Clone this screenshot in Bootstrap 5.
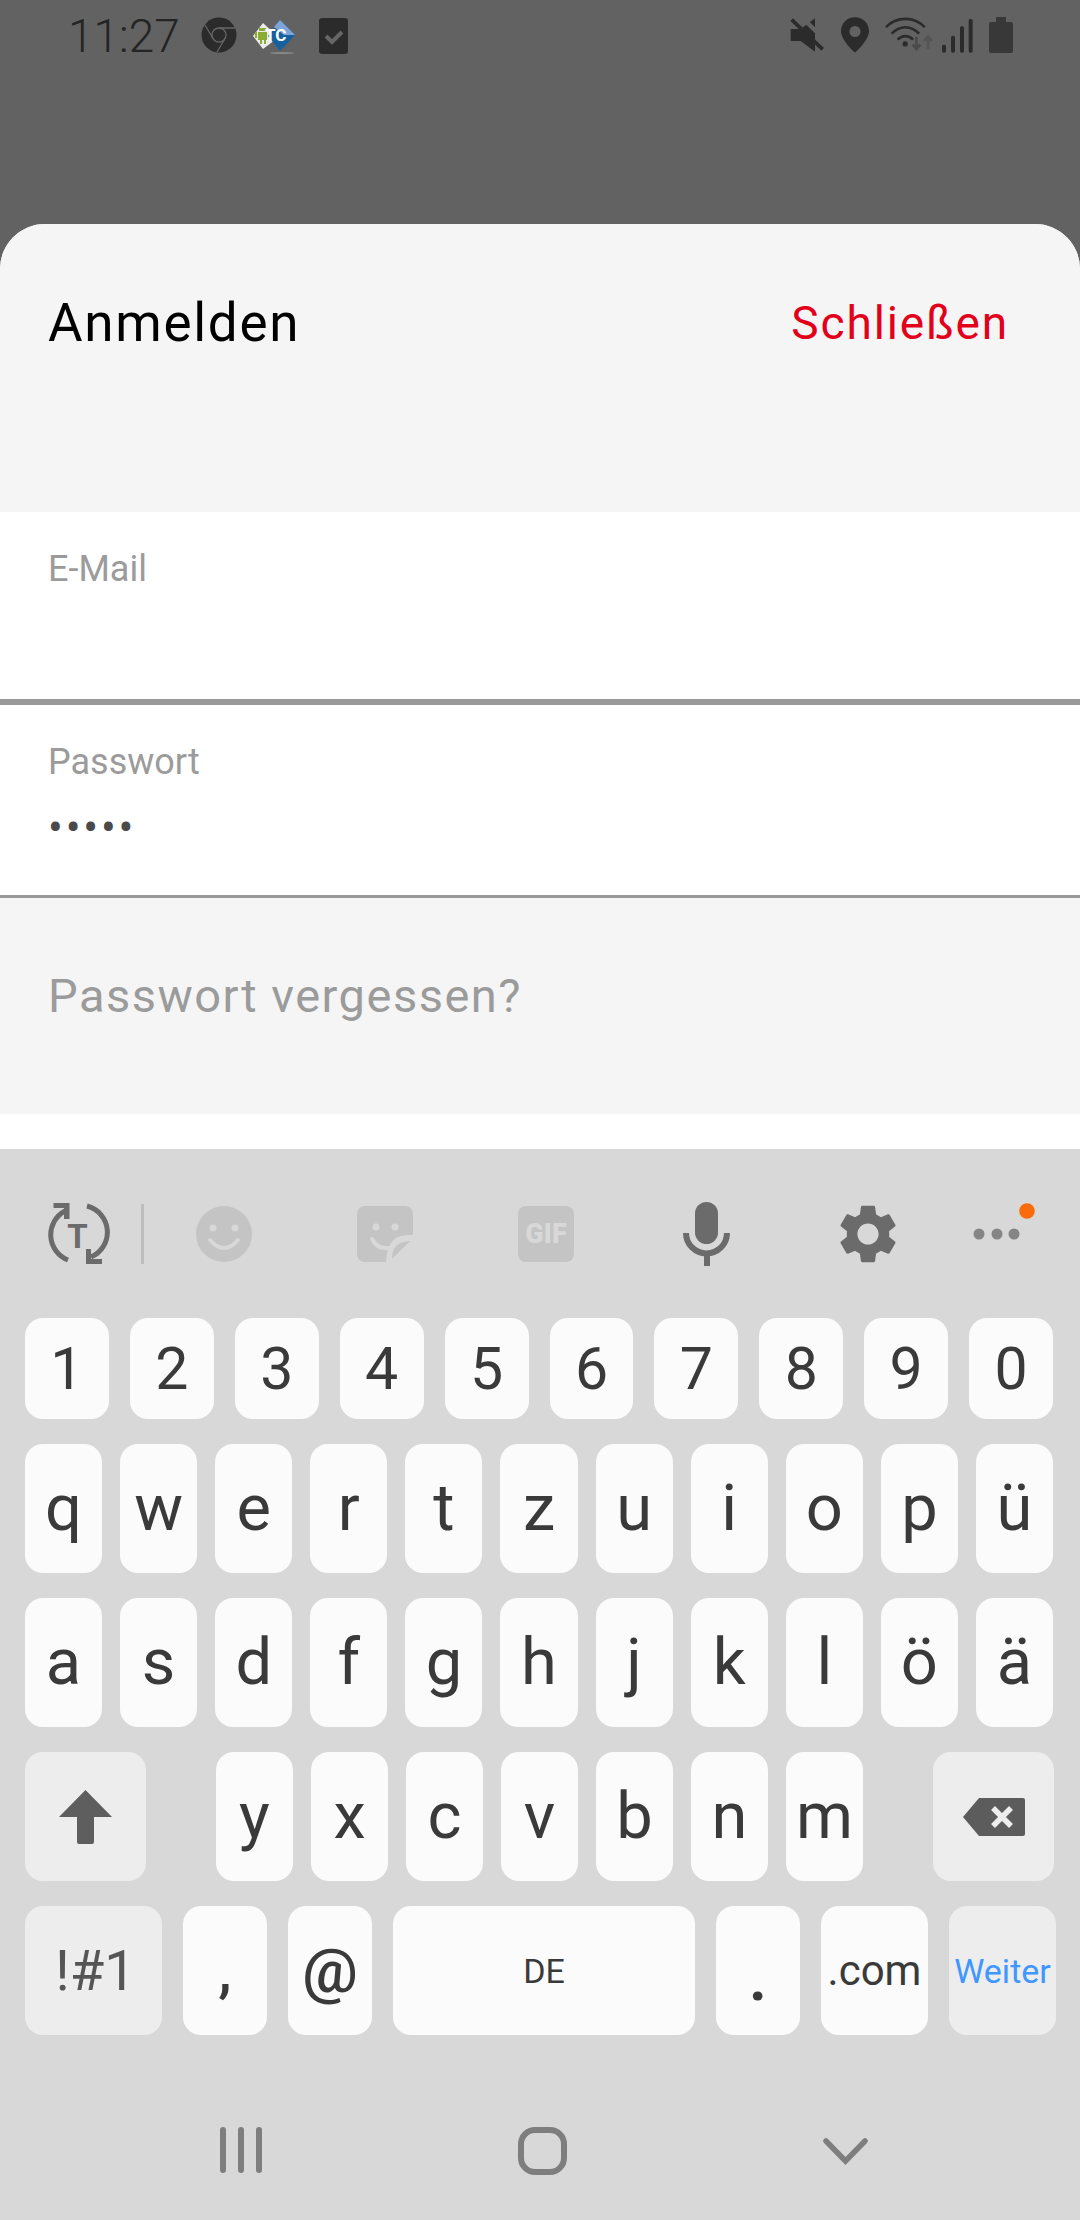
<!DOCTYPE html>
<html lang="de">
<head>
    <meta charset="UTF-8">
    <meta name="viewport" content="width=device-width, initial-scale=1.0">
    <title>Anmelden</title>
    <link href="https://cdn.jsdelivr.net/npm/bootstrap@5.3.0/dist/css/bootstrap.min.css" rel="stylesheet">
    <style>
        html, body { width: 1080px; height: 2220px; overflow: hidden; }
        body { font-family: Roboto, "Liberation Sans", sans-serif; background: #626262; }

        /* status bar */
        .status-area { height: 224px; padding: 17px 67px 0 68px; background: #626262; }
        .clock { font-size: 46px; font-weight: 300; line-height: 38px; color: #242424; margin-right: 21px; }
        .status-area svg { display: block; }

        /* login sheet */
        .sheet { background: #fff; border-radius: 45px 45px 0 0; overflow: hidden; height: 925px; }
        .sheet-head { height: 288px; padding: 68px 71px 0 48px; background: #f5f5f5; }
        .sheet-title { font-size: 53px; line-height: 62px; letter-spacing: 1.7px; color: #000; margin: 0; font-weight: 400; }
        .sheet-close { font-size: 46px; line-height: 62px; letter-spacing: 1.9px; color: #e2001a; }
        .login-field { padding: 0 48px; background: #fff; }
        .field-mail { height: 193px; padding-top: 36px; border-bottom: 6px solid #999; }
        .field-pass { height: 193px; padding-top: 36px; border-bottom: 3px solid #999; }
        .field-label { display: block; font-size: 36px; line-height: 42px; color: #9b9b9b; margin: 0; }
        .field-input { border: 0; padding: 0; border-radius: 0; font-size: 36px; line-height: 42px; height: 42px; color: #4a4a4a; background: transparent; box-shadow: none; }
        .field-input:focus { box-shadow: none; }
        .pass-dots { margin-top: 14px; height: 62px; line-height: 62px; font-size: 44px; letter-spacing: 2.8px; }
        .forgot-row { height: 216px; padding: 0 48px 20px; background: #f5f5f5; font-size: 47px; letter-spacing: 1.5px; color: #9b9b9b; }

        /* keyboard */
        .keyboard { height: 1071px; background: #d8d8d8; }
        .kb-tools { height: 169px; padding-left: 46px; }
        .kb-tools svg { display: block; flex: none; }
        .kb-sep { width: 3px; height: 60px; background: #bdbdbd; margin: 0 52px 0 31px; }
        .kb-row { display: flex; padding: 0 27px 0 25px; margin-bottom: 25px; }
        .kb-row-num { gap: 21px; }
        .kb-row-letters { gap: 18px; }
        .kb-row-shift { gap: 18px; }
        .kb-row-bottom { gap: 21px; padding-right: 24px; }
        .kb-key { flex: 1 1 0; min-width: 0; height: 129px; padding: 0; border: 0; border-radius: 18px; background: #fbfbfb; color: #3a3a3a; font-size: 65px; line-height: 1; display: flex; align-items: center; justify-content: center; }
        .kb-row-num .kb-key { height: 101px; font-size: 59px; }
        .kb-fixed { flex: 0 0 77px; }
        .kb-func { background: #ededed; color: #555; }
        .kb-shift { flex: 0 0 121px; margin-right: 52px; }
        .kb-back { flex: 0 0 121px; margin-left: 52px; }
        .kb-sym { flex: 0 0 137px; font-size: 56px !important; padding-left: 4px; }
        .kb-char { flex: 0 0 84px; font-size: 60px; font-weight: 500; }
        .kb-at { font-size: 62px; }
        .kb-dot { font-size: 70px; padding-top: 10px; }
        .kb-space { flex: 0 0 302px; font-size: 34px !important; }
        .kb-com { flex: 0 0 107px; font-size: 42px !important; }
        .kb-next { flex: 0 0 107px; font-size: 34px !important; color: #3f97ff; }
        .kb-nav { height: 113px; padding: 0 212px 0 220px; }
        .kb-nav svg { display: block; }
    </style>
</head>
<body>
    <div class="status-area d-flex align-items-start">
        <span class="clock">11:27</span>
        <!-- notification icons -->
        <svg width="36" height="36" viewBox="0 0 36 36" style="margin-right:12px">
            <circle cx="18" cy="18" r="17.5" fill="#2b2b2b"/>
            <circle cx="18" cy="18" r="7" fill="none" stroke="#666" stroke-width="1.3"/>
            <path d="M18 11H34M24 21.5L16 35M12 21.5L4 8" stroke="#666" stroke-width="1.3" fill="none"/>
        </svg>
        <svg width="42" height="34" viewBox="0 0 42 34" class="ms-1" style="margin-top:3px">
            <path d="M10 3L22 14 22 20 10 29 0 16Z" fill="#ececec"/>
            <path d="M5 12h9v8H5z" fill="#8bab32"/>
            <path d="M7 20h2v4H7zM11 20h2v4h-2zM2 12h2v6H2zM6 8h7v3H6z" fill="#8bab32"/>
            <path d="M27 0L42 15 27 31 15 16Z" fill="#15609f"/>
            <path d="M27 0L42 15 31 15 21 7Z" fill="#7fa5d8"/>
            <text x="12" y="21" font-size="17" font-weight="700" fill="#fff" font-family="Roboto">TC</text>
            <ellipse cx="29" cy="33" rx="12" ry="1" fill="#888"/>
        </svg>
        <svg width="29" height="36" viewBox="0 0 29 36" style="margin-left:24px;margin-top:1px">
            <rect width="29" height="36" rx="3" fill="#2b2b2b"/>
            <path d="M7 18l6 6 10-10" stroke="#666" stroke-width="4" fill="none"/>
        </svg>

        <!-- system icons -->
        <svg width="34" height="36" viewBox="0 0 102 108" class="ms-auto">
            <path d="M2 36h30L75 4v100L32 72H2z" fill="#2b2b2b"/>
            <path d="M22 0L102 78" stroke="#626262" stroke-width="13" fill="none" transform="translate(8,-4)"/>
            <path d="M5 8L98 97" stroke="#2b2b2b" stroke-width="11" fill="none"/>
        </svg>
        <svg width="28" height="36" viewBox="0 0 84 106" style="margin-left:17px">
            <path fill-rule="evenodd" d="M42 0C18 0 0 18 0 42C0 70 42 106 42 106C42 106 84 70 84 42C84 18 66 0 42 0ZM42 26a16 16 0 1 1 0 33a16 16 0 0 1 0-33Z" fill="#2b2b2b"/>
        </svg>
        <svg width="48" height="36" viewBox="0 0 145 108" style="margin-left:16px">
            <path d="M3 30C35 -3 88 -3 120 30M20 50C45 24 78 24 103 50M38 68C52 54 71 54 85 68" stroke="#2b2b2b" stroke-width="8" fill="none"/>
            <circle cx="61" cy="81" r="8" fill="#2b2b2b"/>
            <path d="M95 60v32M83 82l12 14 12-14" stroke="#4a4a4a" stroke-width="8" fill="none"/>
            <path d="M130 96V62M118 72l12-14 12 14" stroke="#555" stroke-width="8" fill="none"/>
        </svg>
        <svg width="31" height="35" viewBox="0 0 93 105" style="margin-left:9px;margin-top:2px">
            <rect x="0" y="77" width="12" height="24" rx="5" fill="#2b2b2b"/>
            <rect x="27" y="50" width="12" height="51" rx="5" fill="#2b2b2b"/>
            <rect x="54" y="22" width="12" height="79" rx="5" fill="#2b2b2b"/>
            <rect x="80" y="0" width="12" height="101" rx="5" fill="#2b2b2b"/>
        </svg>
        <svg width="24" height="36" viewBox="0 0 24 36" style="margin-left:16px">
            <path d="M7 0h10v5h5a2 2 0 0 1 2 2v27a2 2 0 0 1-2 2H2a2 2 0 0 1-2-2V7a2 2 0 0 1 2-2h5z" fill="#383838"/>
        </svg>
    </div>

    <div class="sheet">
        <div class="sheet-head d-flex justify-content-between align-items-start">
            <h1 class="sheet-title">Anmelden</h1>
            <span class="sheet-close">Schließen</span>
        </div>
        <form>
            <div class="login-field field-mail">
                <label class="field-label" for="mail">E-Mail</label>
                <input id="mail" class="form-control field-input" type="email">
            </div>
            <div class="login-field field-pass">
                <label class="field-label" for="pass">Passwort</label>
                <input id="pass" class="form-control field-input pass-dots" type="password" value="abcde">
            </div>
        </form>
        <div class="forgot-row d-flex align-items-center">Passwort vergessen?</div>
    </div>

    <div class="keyboard">
        <div class="kb-tools d-flex align-items-center">
            <svg width="64" height="62" viewBox="0 0 64 62">
                <path d="M19 8A27 27 0 0 0 22 57M41 3A27 27 0 0 1 45 54" stroke="#6b6b6b" stroke-width="5" fill="none"/>
                <path d="M7.5 0H23.500V16H18V5H7.500zM56 61H40V46H45V56H56z" fill="#6b6b6b"/>
                <text x="31.500" y="45" font-size="33" font-weight="700" text-anchor="middle" fill="#6b6b6b" font-family="Roboto">T</text>
            </svg>
            <div class="kb-sep"></div>
            <svg width="56" height="56" viewBox="0 0 56 56" style="margin-right:105px">
                <circle cx="28" cy="28" r="28" fill="#c4c4c4"/>
                <circle cx="17" cy="22" r="3.500" fill="#d8d8d8"/>
                <circle cx="39" cy="22" r="3.500" fill="#d8d8d8"/>
                <path d="M14 34Q28 50 42 34" stroke="#d8d8d8" stroke-width="4" stroke-linecap="round" fill="none"/>
            </svg>
            <svg width="56" height="56" viewBox="0 0 56 56" style="margin-right:105px">
                <path d="M8 0H48a8 8 0 0 1 8 8V29C42 29 31 30 29 56H8a8 8 0 0 1-8-8V8A8 8 0 0 1 8 0Z" fill="#c4c4c4"/>
                <path d="M35 53C35 44 38 36 53 35Z" fill="#c4c4c4"/>
                <circle cx="19" cy="21" r="3.500" fill="#d8d8d8"/>
                <circle cx="38" cy="21" r="3.500" fill="#d8d8d8"/>
                <path d="M15 33Q20 43 31 42" stroke="#d8d8d8" stroke-width="4" stroke-linecap="round" fill="none"/>
            </svg>
            <svg width="56" height="56" viewBox="0 0 56 56" style="margin-right:109px">
                <rect width="56" height="56" rx="8" fill="#c4c4c4"/>
                <text x="28" y="37" font-size="27" font-weight="900" text-anchor="middle" fill="#d8d8d8" font-family="Roboto">GIF</text>
            </svg>
            <svg width="47" height="64" viewBox="0 0 47 64" style="margin-right:110px">
                <rect x="12" y="0" width="23" height="42" rx="11.500" fill="#6b6b6b"/>
                <path d="M3 31a20.500 20.500 0 0 0 41 0" stroke="#6b6b6b" stroke-width="6" fill="none"/>
                <rect x="21" y="53" width="6" height="11" fill="#6b6b6b"/>
            </svg>
            <svg width="56" height="60" viewBox="2.500 2 19 20" style="margin-right:77px">
                <path fill="#6b6b6b" d="M19.140 12.940c.04-.3.06-.61.06-.94 0-.32-.02-.64-.07-.94l2.030-1.580c.18-.14.23-.41.12-.61l-1.920-3.320c-.12-.22-.37-.29-.59-.22l-2.390.96c-.5-.38-1.030-.7-1.620-.94l-.36-2.540c-.04-.24-.24-.41-.48-.41h-3.840c-.24 0-.43.17-.47.41l-.36 2.540c-.59.24-1.130.57-1.620.94l-2.390-.96c-.22-.08-.47 0-.59.22L2.740 8.870c-.12.21-.08.47.12.61l2.030 1.580c-.05.3-.09.63-.09.94s.02.64.07.94l-2.030 1.580c-.18.14-.23.41-.12.61l1.920 3.320c.12.22.37.29.59.22l2.390-.96c.5.38 1.030.7 1.620.94l.36 2.540c.05.24.24.41.48.41h3.840c.24 0 .44-.17.47-.41l.36-2.540c.59-.24 1.130-.56 1.620-.94l2.390.96c.22.08.47 0 .59-.22l1.920-3.320c.12-.22.07-.47-.12-.61l-2.010-1.580zM12 15.600c-1.980 0-3.600-1.620-3.600-3.600s1.620-3.600 3.600-3.600 3.600 1.620 3.600 3.600-1.620 3.600-3.600 3.600z"/>
            </svg>
            <svg width="62" height="62" viewBox="0 0 62 62">
                <circle cx="6" cy="31" r="5.500" fill="#858585"/>
                <circle cx="24" cy="31" r="5.500" fill="#858585"/>
                <circle cx="41" cy="31" r="5.500" fill="#858585"/>
                <circle cx="54" cy="8" r="7.800" fill="#f96b0b"/>
            </svg>
        </div>

        <div class="kb-row kb-row-num">
            <button class="btn kb-key">1</button><button class="btn kb-key">2</button><button class="btn kb-key">3</button><button class="btn kb-key">4</button><button class="btn kb-key">5</button><button class="btn kb-key">6</button><button class="btn kb-key">7</button><button class="btn kb-key">8</button><button class="btn kb-key">9</button><button class="btn kb-key">0</button>
        </div>
        <div class="kb-row kb-row-letters">
            <button class="btn kb-key">q</button><button class="btn kb-key">w</button><button class="btn kb-key">e</button><button class="btn kb-key">r</button><button class="btn kb-key">t</button><button class="btn kb-key">z</button><button class="btn kb-key">u</button><button class="btn kb-key">i</button><button class="btn kb-key">o</button><button class="btn kb-key">p</button><button class="btn kb-key">ü</button>
        </div>
        <div class="kb-row kb-row-letters">
            <button class="btn kb-key">a</button><button class="btn kb-key">s</button><button class="btn kb-key">d</button><button class="btn kb-key">f</button><button class="btn kb-key">g</button><button class="btn kb-key">h</button><button class="btn kb-key">j</button><button class="btn kb-key">k</button><button class="btn kb-key">l</button><button class="btn kb-key">ö</button><button class="btn kb-key">ä</button>
        </div>
        <div class="kb-row kb-row-shift">
            <button class="btn kb-key kb-func kb-shift" aria-label="Umschalt">
                <svg width="53" height="54" viewBox="0 0 53 54"><path d="M26.500 0L53 27H35V52a2 2 0 0 1-2 2H20a2 2 0 0 1-2-2V27H0Z" fill="#5e5e5e"/></svg>
            </button>
            <button class="btn kb-key kb-fixed">y</button><button class="btn kb-key kb-fixed">x</button><button class="btn kb-key kb-fixed">c</button><button class="btn kb-key kb-fixed">v</button><button class="btn kb-key kb-fixed">b</button><button class="btn kb-key kb-fixed">n</button><button class="btn kb-key kb-fixed">m</button>
            <button class="btn kb-key kb-func kb-back" aria-label="Löschen">
                <svg width="62" height="38" viewBox="0 0 62 38"><path d="M16 0H60a2 2 0 0 1 2 2V36a2 2 0 0 1-2 2H16L0 19Z" fill="#5c5c5c"/><path d="M30 10L48 28M48 10L30 28" stroke="#ededed" stroke-width="5.500"/></svg>
            </button>
        </div>
        <div class="kb-row kb-row-bottom">
            <button class="btn kb-key kb-func kb-sym">!#1</button>
            <button class="btn kb-key kb-char">,</button>
            <button class="btn kb-key kb-char kb-at">@</button>
            <button class="btn kb-key kb-space">DE</button>
            <button class="btn kb-key kb-char kb-dot">.</button>
            <button class="btn kb-key kb-com">.com</button>
            <button class="btn kb-key kb-func kb-next">Weiter</button>
        </div>

        <div class="kb-nav d-flex justify-content-between align-items-end">
            <svg width="42" height="46" viewBox="0 0 42 46">
                <rect x="0" y="0" width="6" height="46" rx="3" fill="#7e7e7e"/>
                <rect x="18" y="0" width="6" height="46" rx="3" fill="#7e7e7e"/>
                <rect x="36" y="0" width="6" height="46" rx="3" fill="#7e7e7e"/>
            </svg>
            <svg width="49" height="48" viewBox="0 0 49 48" style="margin-bottom:-2px">
                <rect x="3" y="3" width="43" height="42" rx="14" fill="none" stroke="#7e7e7e" stroke-width="6"/>
            </svg>
            <svg width="45" height="27" viewBox="0 0 45 27" style="margin-bottom:8px">
                <path d="M3 3L22.500 23 42 3" fill="none" stroke="#7e7e7e" stroke-width="5.500" stroke-linecap="round"/>
            </svg>
        </div>
    </div>

    <script src="https://cdn.jsdelivr.net/npm/bootstrap@5.3.0/dist/js/bootstrap.bundle.min.js"></script>
</body>
</html>
